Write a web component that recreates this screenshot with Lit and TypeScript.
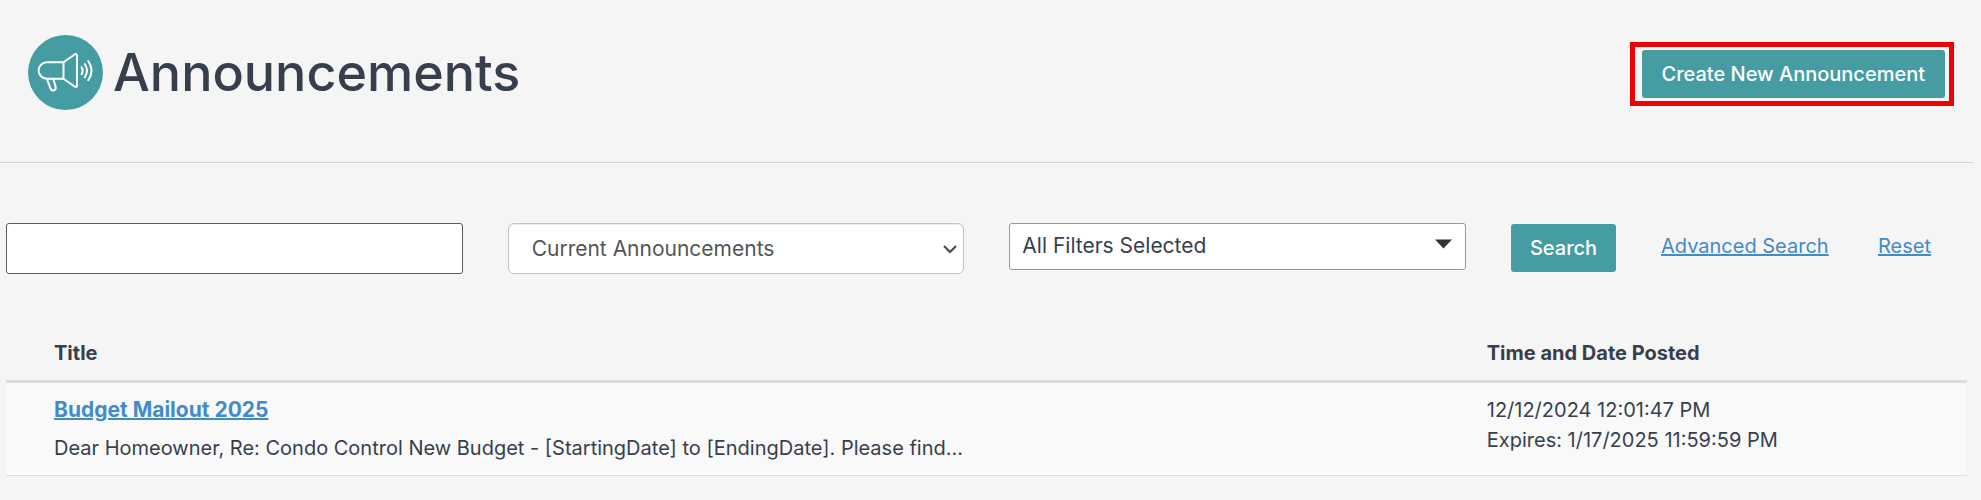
import { LitElement, html, css } from "lit";
import { customElement } from "lit/decorators.js";

interface Announcement {
  title: string;
  excerpt: string;
  posted: string;
  expires: string;
}

const announcements: Announcement[] = [
  {
    title: "Budget Mailout 2025",
    excerpt:
      "Dear Homeowner, Re: Condo Control New Budget - [StartingDate] to [EndingDate]. Please find...",
    posted: "12/12/2024 12:01:47 PM",
    expires: "1/17/2025 11:59:59 PM",
  },
];

@customElement("app-root")
export class AppRoot extends LitElement {
  static styles = css`
    :host {
      display: block;
      min-height: 100vh;
      background: #f5f5f5;
      color: #373f4d;
      font-family: Inter, "Liberation Sans", sans-serif;
      font-size: 20px;
      line-height: 30px;
    }
    * {
      box-sizing: border-box;
    }
    .header {
      display: flex;
      align-items: flex-start;
      justify-content: space-between;
      margin-right: 8px;
      padding: 35px 19px 52px 28px;
      border-bottom: 1px solid #d3d3d3;
    }
    .heading {
      display: flex;
      align-items: center;
      gap: 10px;
    }
    .badge {
      display: block;
      width: 75px;
      height: 75px;
    }
    h1 {
      margin: 0;
      font-size: 52px;
      line-height: 75px;
      font-weight: 500;
    }
    .highlight {
      margin-top: 7px;
      padding: 3px 4px 3px 7px;
      border: 5px solid #ed0505;
    }
    .button {
      display: block;
      height: 48px;
      padding: 0 20px;
      border: 0;
      border-radius: 3px;
      background: #459da3;
      color: #fff;
      font: inherit;
      font-weight: 500;
      white-space: nowrap;
    }
    .filters {
      display: grid;
      grid-template-columns: repeat(3, 1fr) 105px 172px 56px;
      align-items: start;
      column-gap: 45px;
      padding: 60px 47px 0 6px;
    }
    .keyword,
    .choice {
      width: 100%;
      height: 51px;
      margin: 0;
      background: #fff;
      font: inherit;
      font-size: 21px;
    }
    .keyword {
      padding: 0 12px;
      border: 1px solid #5c5c5c;
      border-radius: 3px;
    }
    .picker {
      display: grid;
      align-items: center;
    }
    .picker > * {
      grid-area: 1 / 1;
    }
    .picker svg {
      justify-self: end;
      pointer-events: none;
    }
    .choice {
      appearance: none;
      padding: 0 40px 0 23px;
      border: 1px solid #c4c4c4;
      border-radius: 6px;
      box-shadow: inset 0 1px 1px rgba(0, 0, 0, 0.075);
      color: #555;
    }
    .choice.all {
      height: 47px;
      padding: 0 40px 2px 12px;
      border-color: #999;
      border-radius: 3px;
      box-shadow: none;
      color: #373f4d;
    }
    .chevron {
      width: 14px;
      height: 10px;
      margin-right: 7px;
    }
    .caret {
      width: 17px;
      height: 10px;
      margin: 0 14px 6px 0;
    }
    a {
      color: #428bca;
      text-decoration: underline;
      text-decoration-thickness: 2px;
    }
    .search {
      margin-top: 1px;
      padding: 0;
    }
    .link {
      margin-top: 8px;
      white-space: nowrap;
    }
    table {
      width: calc(100% - 20px);
      margin: 54px 14px 0 6px;
      border-collapse: collapse;
      table-layout: fixed;
    }
    th {
      padding: 10px 10px 12px;
      border-bottom: 3px solid #ddd;
      text-align: left;
      font-weight: 700;
    }
    td {
      padding: 12px 10px;
      border-bottom: 1px solid #ddd;
      background: #f9f9f9;
      vertical-align: top;
    }
    .title {
      padding-left: 48px;
    }
    .posted {
      width: 25%;
    }
    .name {
      font-size: 21px;
      font-weight: 700;
    }
    p {
      margin: 0;
    }
    .excerpt {
      margin-top: 8px;
    }
  `;

  render() {
    return html`
      <header class="header">
        <div class="heading">
          <svg class="badge" viewBox="0 0 75 75" aria-hidden="true">
            <circle cx="37.5" cy="37.5" r="37.5" fill="#459da3" />
            <g
              fill="none"
              stroke="#fff"
              stroke-width="2"
              stroke-linejoin="round"
              stroke-linecap="round"
            >
              <path d="M35.5 27.3H18.8a8.2 8.2 0 0 0 0 16.4H35.5z" />
              <path d="M35.5 27.3L46.6 19.5Q49 18.3 49 20.8V50.2Q49 52.7 46.6 51.5L35.5 43.7" />
              <path d="M18.9 44l3.6 9.5q1.1 2.6 3.5 1.8 2.4-.9 1.6-3.5L25.3 44" />
              <path d="M53.6 32.2q2.1 3.5 0 7" />
              <path d="M56.8 29q4.3 6.6 0 13.2" />
              <path d="M60.2 26q6.6 9.6 0 19.2" />
            </g>
          </svg>
          <h1>Announcements</h1>
        </div>
        <div class="highlight">
          <button class="button" type="button">Create New Announcement</button>
        </div>
      </header>

      <form class="filters" @submit=${(e: Event) => e.preventDefault()}>
        <input class="keyword" type="text" aria-label="Keyword" />
        <div class="picker">
          <select class="choice" aria-label="Announcement status">
            <option>Current Announcements</option>
          </select>
          <svg class="chevron" viewBox="0 0 14 10" aria-hidden="true">
            <path d="M1 2l6 6 6-6" fill="none" stroke="#4a4a4a" stroke-width="2.2" />
          </svg>
        </div>
        <div class="picker">
          <select class="choice all" aria-label="Filters">
            <option>All Filters Selected</option>
          </select>
          <svg class="caret" viewBox="0 0 17 10" aria-hidden="true">
            <path d="M0 .5h17L8.5 9.5z" fill="#333" />
          </svg>
        </div>
        <button class="button search" type="submit">Search</button>
        <a class="link" href="#advanced">Advanced Search</a>
        <a class="link" href="#reset">Reset</a>
      </form>

      <table>
        <thead>
          <tr>
            <th class="title" scope="col">Title</th>
            <th class="posted" scope="col">Time and Date Posted</th>
          </tr>
        </thead>
        <tbody>
          ${announcements.map(
            (item) => html`
              <tr>
                <td class="title">
                  <a class="name" href="#announcement">${item.title}</a>
                  <p class="excerpt">${item.excerpt}</p>
                </td>
                <td>
                  <p>${item.posted}</p>
                  <p>Expires: ${item.expires}</p>
                </td>
              </tr>
            `
          )}
        </tbody>
      </table>
    `;
  }
}
